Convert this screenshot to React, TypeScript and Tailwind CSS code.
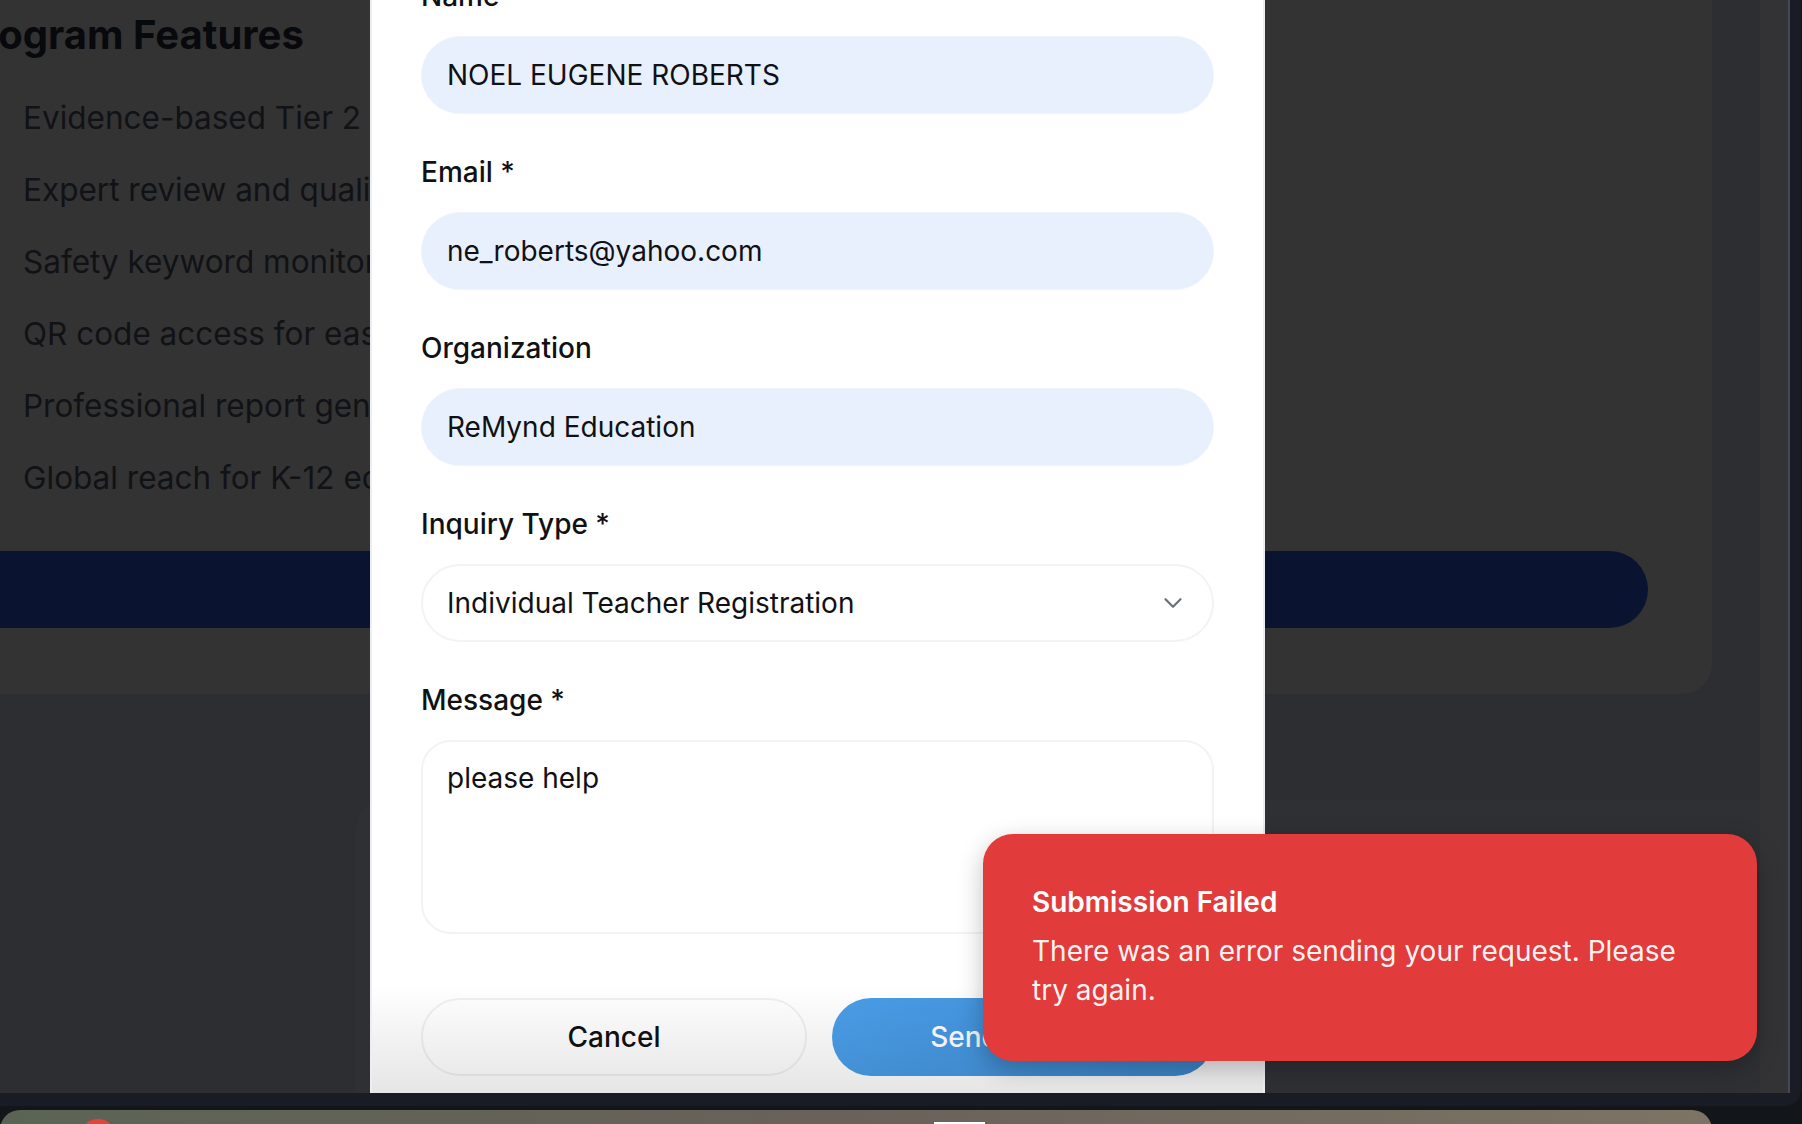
import { ChevronDown } from "lucide-react";

const features = [
  "Evidence-based Tier 2 intervention curriculum",
  "Expert review and quality assurance",
  "Safety keyword monitoring and alerts",
  "QR code access for easy student entry",
  "Professional report generation",
  "Global reach for K-12 educators",
];

function Label({ text }: { text: string }) {
  return <label className="block text-[28px] font-medium leading-[40px] text-[#111114]">{text}</label>;
}

export default function App() {
  return (
    <div className="relative h-[1124px] w-[1802px] overflow-hidden bg-[#12151a] font-['Inter',sans-serif]">
      {/* browser window */}
      <div className="h-[1106px] w-[1801px] overflow-hidden rounded-br-[16px] bg-[#191c24] pb-[13px] pr-[11px]">
        <div className="flex h-[1093px] w-[1790px] border-r-2 border-[#464952]">
          <main className="flex-1 overflow-hidden bg-[#2d2e32]">
            <section className="-ml-[80px] -mt-[60px] w-[1792px] rounded-b-[30px] bg-[#333333] pb-[66px] pl-[37px] pr-[64px] pt-[73px]">
              <h2 className="whitespace-nowrap text-[40px] font-bold leading-[44px] text-[#08090d]">Program Features</h2>
              <ul className="mt-[37px] flex flex-col gap-[24px] pl-[66px]">
                {features.map((f) => (
                  <li key={f} className="whitespace-nowrap text-[31.5px] leading-[48px] text-[#111216]">
                    {f}
                  </li>
                ))}
              </ul>
              <div className="mt-[49px] h-[77px] rounded-full bg-[#0a1430]" />
            </section>
            <div className="ml-[355px] mt-[106px] h-[400px] rounded-tl-[30px] bg-[#2f3034]" />
          </main>
          <div className="w-[28px] bg-[#333336]" />
        </div>
      </div>

      {/* dock */}
      <div className="mt-[4px] flex h-[20px] w-[1712px] items-start rounded-t-[22px] bg-gradient-to-r from-[#5b6454] via-[#6a615a] to-[#7d7466] pl-[80px] pt-[9px]">
        <div className="h-[36px] w-[36px] rounded-full bg-[#e0463a]" />
        <div className="ml-[818px] mt-[3px] h-[10px] w-[51px] bg-white" />
      </div>

      {/* modal */}
      <div className="absolute left-[370px] top-0 h-[1093px] w-[895px] overflow-hidden border-x-2 border-[#eceef2] bg-white">
        <form className="-mt-[24px] flex flex-col px-[49px]">
          <Label text="Name *" />
          <div className="mt-[20px] flex h-[78px] items-center rounded-full border border-[#eef2fb] bg-[#e8f0fe] px-[25px] text-[28px] text-[#111114]">
            NOEL EUGENE ROBERTS
          </div>
          <div className="mt-[38px]">
            <Label text="Email *" />
          </div>
          <div className="mt-[20px] flex h-[78px] items-center rounded-full border border-[#eef2fb] bg-[#e8f0fe] px-[25px] text-[28px] text-[#111114]">
            ne_roberts@yahoo.com
          </div>
          <div className="mt-[38px]">
            <Label text="Organization" />
          </div>
          <div className="mt-[20px] flex h-[78px] items-center rounded-full border border-[#eef2fb] bg-[#e8f0fe] px-[25px] text-[28px] text-[#111114]">
            ReMynd Education
          </div>
          <div className="mt-[38px]">
            <Label text="Inquiry Type *" />
          </div>
          <div className="mt-[20px] flex h-[78px] items-center justify-between rounded-full border-2 border-[#f3f3f4] bg-white pl-[24px] pr-[24px] text-[28px] text-[#111114]">
            <span>Individual Teacher Registration</span>
            <ChevronDown className="h-[30px] w-[30px] text-[#6b6f76]" strokeWidth={1.75} />
          </div>
          <div className="mt-[38px]">
            <Label text="Message *" />
          </div>
          <div className="mt-[20px] h-[194px] rounded-[30px] border-2 border-[#f3f3f4] bg-white px-[24px] pt-[16px] text-[28px] leading-[40px] text-[#111114]">
            please help
          </div>
          <div className="mt-[64px] flex gap-[25px]">
            <button type="button" className="h-[78px] w-[386px] rounded-full border-2 border-[#f0f0f1] bg-white text-[28px] font-medium text-[#111114]">
              Cancel
            </button>
            <button type="button" className="h-[78px] flex-1 rounded-full bg-gradient-to-r from-[#4a9ee9] to-[#3f8bd3] text-[28px] font-medium text-white">
              Send Request
            </button>
          </div>
        </form>
        <div className="pointer-events-none absolute bottom-0 left-0 h-[110px] w-full bg-gradient-to-b from-transparent to-black/10" />
      </div>

      {/* toast */}
      <div className="absolute left-[983px] top-[834px] flex h-[227px] w-[774px] flex-col justify-center rounded-[30px] bg-[#e13c3b] px-[49px] shadow-[0_8px_24px_rgba(0,0,0,0.25)]">
        <p className="text-[28px] font-semibold leading-[35px] text-white">Submission Failed</p>
        <p className="mt-[12px] text-[28px] leading-[39px] text-white/95">
          There was an error sending your request. Please try again.
        </p>
      </div>
    </div>
  );
}
